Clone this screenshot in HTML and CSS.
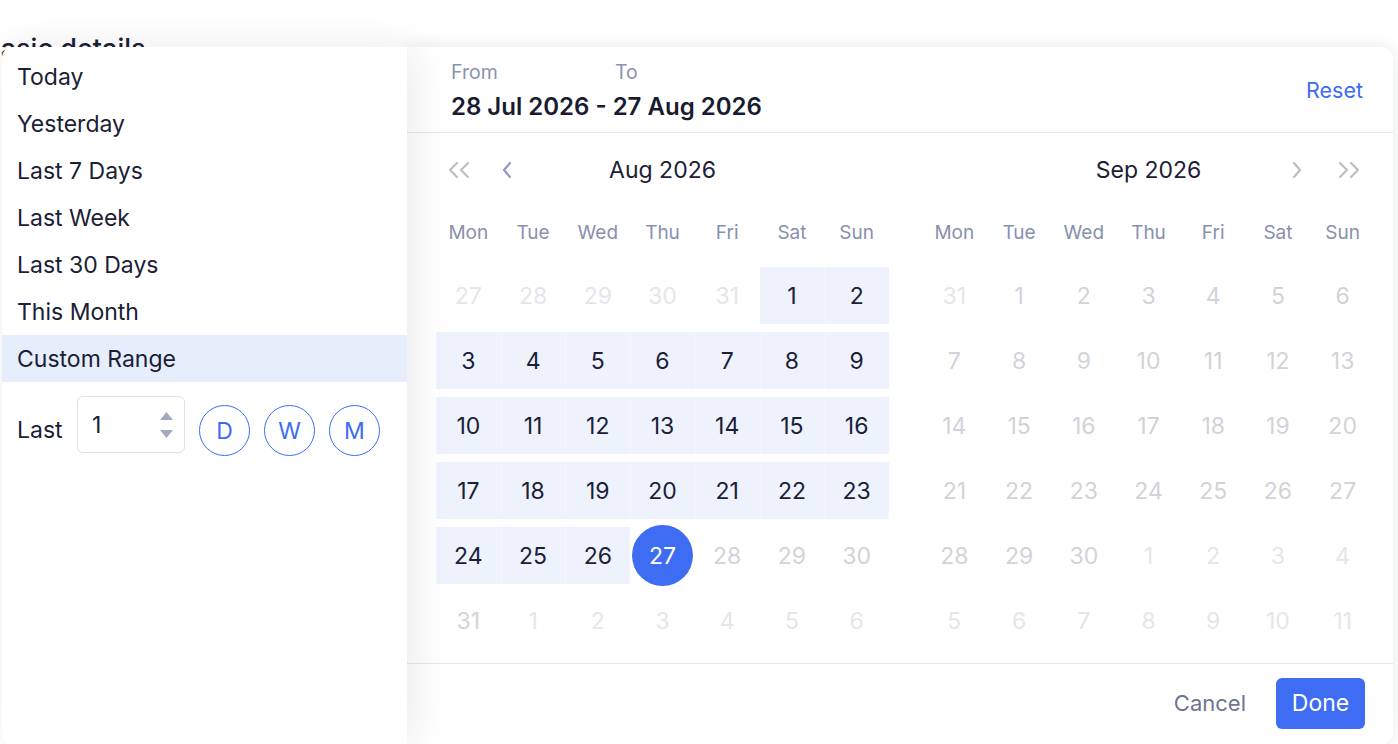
FILE: index.html
```html
<!DOCTYPE html>
<html lang="en">
<head>
<meta charset="utf-8">
<title>Basic details – date range</title>
<link rel="stylesheet" href="styles.css">
</head>
<body>
<main class="page">
  <h2 class="page-title">Basic details</h2>
</main>

<div class="picker">
  <aside class="presets">
    <ul class="preset-list">
      <li class="preset">Today</li>
      <li class="preset">Yesterday</li>
      <li class="preset">Last 7 Days</li>
      <li class="preset">Last Week</li>
      <li class="preset">Last 30 Days</li>
      <li class="preset">This Month</li>
      <li class="preset is-active">Custom Range</li>
    </ul>
    <div class="last-row">
      <span class="last-label">Last</span>
      <div class="num-input">
        <span class="num-value">1</span>
        <span class="spin">
          <svg class="spin-arrow" width="13" height="8" viewBox="0 0 13 8"><path d="M6.5 0 L13 8 L0 8 Z"/></svg>
          <svg class="spin-arrow" width="13" height="8" viewBox="0 0 13 8"><path d="M0 0 L13 0 L6.5 8 Z"/></svg>
        </span>
      </div>
      <button class="unit">D</button>
      <button class="unit">W</button>
      <button class="unit">M</button>
    </div>
  </aside>

  <section class="calendar">
    <header class="cal-head">
      <div class="range">
        <div class="range-labels"><span class="lbl-from">From</span><span>To</span></div>
        <div class="range-value">28 Jul 2026 - 27 Aug 2026</div>
      </div>
      <button class="reset">Reset</button>
    </header>

    <div class="months">
      <div class="month">
        <div class="month-nav">
          <div class="nav-group">
            <svg class="chev chev-muted" width="26" height="18" viewBox="0 0 26 18"><path d="M10 2 L3 9 L10 16 M21 2 L14 9 L21 16"/></svg>
            <svg class="chev chev-active" width="12" height="18" viewBox="0 0 12 18"><path d="M9 2 L3 9 L9 16"/></svg>
          </div>
          <div class="month-title">Aug 2026</div>
          <div class="nav-group"></div>
        </div>
        <div class="weekdays">
          <span>Mon</span><span>Tue</span><span>Wed</span><span>Thu</span><span>Fri</span><span>Sat</span><span>Sun</span>
        </div>
        <div class="days">
          <span class="day out">27</span><span class="day out">28</span><span class="day out">29</span><span class="day out">30</span><span class="day out">31</span><span class="day in-range">1</span><span class="day in-range">2</span>
          <span class="day in-range">3</span><span class="day in-range">4</span><span class="day in-range">5</span><span class="day in-range">6</span><span class="day in-range">7</span><span class="day in-range">8</span><span class="day in-range">9</span>
          <span class="day in-range">10</span><span class="day in-range">11</span><span class="day in-range">12</span><span class="day in-range">13</span><span class="day in-range">14</span><span class="day in-range">15</span><span class="day in-range">16</span>
          <span class="day in-range">17</span><span class="day in-range">18</span><span class="day in-range">19</span><span class="day in-range">20</span><span class="day in-range">21</span><span class="day in-range">22</span><span class="day in-range">23</span>
          <span class="day in-range">24</span><span class="day in-range">25</span><span class="day in-range">26</span><span class="day range-end"><span class="end-dot">27</span></span><span class="day disabled">28</span><span class="day disabled">29</span><span class="day disabled">30</span>
          <span class="day disabled">31</span><span class="day out">1</span><span class="day out">2</span><span class="day out">3</span><span class="day out">4</span><span class="day out">5</span><span class="day out">6</span>
        </div>
      </div>

      <div class="month">
        <div class="month-nav">
          <div class="nav-group"></div>
          <div class="month-title">Sep 2026</div>
          <div class="nav-group nav-right">
            <svg class="chev chev-muted" width="12" height="18" viewBox="0 0 12 18"><path d="M3 2 L9 9 L3 16"/></svg>
            <svg class="chev chev-muted" width="26" height="18" viewBox="0 0 26 18"><path d="M5 2 L12 9 L5 16 M16 2 L23 9 L16 16"/></svg>
          </div>
        </div>
        <div class="weekdays">
          <span>Mon</span><span>Tue</span><span>Wed</span><span>Thu</span><span>Fri</span><span>Sat</span><span>Sun</span>
        </div>
        <div class="days">
          <span class="day out">31</span><span class="day disabled">1</span><span class="day disabled">2</span><span class="day disabled">3</span><span class="day disabled">4</span><span class="day disabled">5</span><span class="day disabled">6</span>
          <span class="day disabled">7</span><span class="day disabled">8</span><span class="day disabled">9</span><span class="day disabled">10</span><span class="day disabled">11</span><span class="day disabled">12</span><span class="day disabled">13</span>
          <span class="day disabled">14</span><span class="day disabled">15</span><span class="day disabled">16</span><span class="day disabled">17</span><span class="day disabled">18</span><span class="day disabled">19</span><span class="day disabled">20</span>
          <span class="day disabled">21</span><span class="day disabled">22</span><span class="day disabled">23</span><span class="day disabled">24</span><span class="day disabled">25</span><span class="day disabled">26</span><span class="day disabled">27</span>
          <span class="day disabled">28</span><span class="day disabled">29</span><span class="day disabled">30</span><span class="day out">1</span><span class="day out">2</span><span class="day out">3</span><span class="day out">4</span>
          <span class="day out">5</span><span class="day out">6</span><span class="day out">7</span><span class="day out">8</span><span class="day out">9</span><span class="day out">10</span><span class="day out">11</span>
        </div>
      </div>
    </div>

    <footer class="cal-foot">
      <button class="btn-cancel">Cancel</button>
      <button class="btn-done">Done</button>
    </footer>
  </section>
</div>
</body>
</html>
```

FILE: styles.css
```css
* { box-sizing: border-box; }

html, body { margin: 0; }

body {
  width: 1398px;
  height: 744px;
  overflow: hidden;
  position: relative;
  background: #ffffff;
  font-family: Inter, "Liberation Sans", sans-serif;
  color: #1b2036;
}

button {
  font: inherit;
  border: 0;
  background: none;
  padding: 0;
  cursor: pointer;
}

/* page underneath the popup */
.page { padding-top: 32px; }

.page-title {
  margin: 0 0 0 -17px;
  font-size: 27px;
  font-weight: 500;
  line-height: 34px;
}

/* popup */
.picker {
  position: absolute;
  left: 2px;
  top: 47px;
  height: 697px;
  display: flex;
}

.presets {
  position: relative;
  z-index: 2;
  width: 405px;
  background: #fff;
  border-radius: 10px 0 0 10px;
  box-shadow: 6px 0 40px rgba(30, 35, 60, 0.09);
  padding-top: 6px;
}

.preset-list {
  list-style: none;
  margin: 0;
  padding: 0;
}

.preset {
  height: 47px;
  display: flex;
  align-items: center;
  padding-left: 15px;
  font-size: 23px;
}

.preset.is-active { background: #e6eefc; }

.last-row {
  display: flex;
  align-items: flex-start;
  padding: 14px 0 0 15px;
}

.last-label {
  font-size: 23px;
  line-height: 28px;
  margin-top: 20px;
  width: 60px;
}

.num-input {
  width: 108px;
  height: 57px;
  border: 1px solid #dfe2eb;
  border-radius: 6px;
  display: flex;
  align-items: center;
  justify-content: space-between;
  padding: 0 11px 0 14px;
}

.num-value { font-size: 23px; }

.spin {
  display: flex;
  flex-direction: column;
  gap: 10px;
}

.spin-arrow { display: block; fill: #a1a9be; }

.unit {
  width: 51px;
  height: 51px;
  margin: 9px 0 0 14px;
  border: 1px solid #3e6cf3;
  border-radius: 50%;
  color: #3e6cf3;
  font-size: 23px;
  display: flex;
  align-items: center;
  justify-content: center;
}

.unit + .unit { margin-left: 14px; }

/* calendar panel */
.calendar {
  width: 986px;
  background: #fff;
  border-radius: 0 12px 12px 0;
  box-shadow: 0 0 18px rgba(20, 25, 45, 0.1);
  display: flex;
  flex-direction: column;
}

.cal-head {
  height: 86px;
  border-bottom: 1px solid #e3e5f0;
  display: flex;
  align-items: center;
  justify-content: space-between;
  padding: 0 30px 0 44px;
}

.range { padding-top: 3px; }

.range-labels {
  display: flex;
  font-size: 19.5px;
  line-height: 22px;
  color: #8a94b0;
}

.lbl-from { width: 164px; }

.range-value {
  margin-top: 9px;
  font-size: 24px;
  font-weight: 600;
  line-height: 30px;
  color: #171c30;
}

.reset {
  color: #3e6cf3;
  font-size: 21.5px;
}

.months {
  display: flex;
  gap: 33px;
  padding: 0 18px 0 29px;
  height: 530px;
}

.month { width: 453px; }

.month-nav {
  height: 74px;
  display: grid;
  grid-template-columns: 1fr auto 1fr;
  align-items: center;
}

.nav-group {
  display: flex;
  align-items: center;
  gap: 28px;
  padding-left: 11px;
}

.nav-right {
  justify-content: flex-end;
  gap: 32px;
  padding: 0 14px 0 0;
}

.chev {
  display: block;
  fill: none;
  stroke-width: 2.2;
  stroke-linecap: round;
  stroke-linejoin: round;
}

.chev-muted { stroke: #bdbec2; }
.chev-active { stroke: #8c9bc3; }

.month-title {
  font-size: 23px;
  color: #1b2036;
}

.weekdays {
  height: 50px;
  display: grid;
  grid-template-columns: repeat(7, 1fr);
  align-items: center;
  text-align: center;
  font-size: 19px;
  color: #8791ae;
  margin-bottom: 10px;
}

.days {
  display: grid;
  grid-template-columns: repeat(7, 1fr);
  grid-auto-rows: 57px;
  row-gap: 8px;
}

.day {
  display: flex;
  align-items: center;
  justify-content: center;
  font-size: 23px;
  color: #1b2036;
}

.day.out { color: #e5e6ea; }
.day.disabled { color: #d2d3d8; }
.day.in-range { background: #edf2fd; }

.day.in-range + .day.in-range { box-shadow: inset 1px 0 0 #f3f6fe; }

.end-dot {
  flex: none;
  width: 61px;
  height: 61px;
  border-radius: 50%;
  background: #3e6cf3;
  color: #fff;
  display: flex;
  align-items: center;
  justify-content: center;
}

.cal-foot {
  flex: 1;
  border-top: 1px solid #e3e5f0;
  display: flex;
  align-items: center;
  justify-content: flex-end;
  gap: 30px;
  padding: 0 28px 2px 0;
}

.btn-cancel {
  color: #6c7592;
  font-size: 22px;
}

.btn-done {
  width: 89px;
  height: 51px;
  border-radius: 6px;
  background: #3e6cf3;
  color: #fff;
  font-size: 23px;
}
```
